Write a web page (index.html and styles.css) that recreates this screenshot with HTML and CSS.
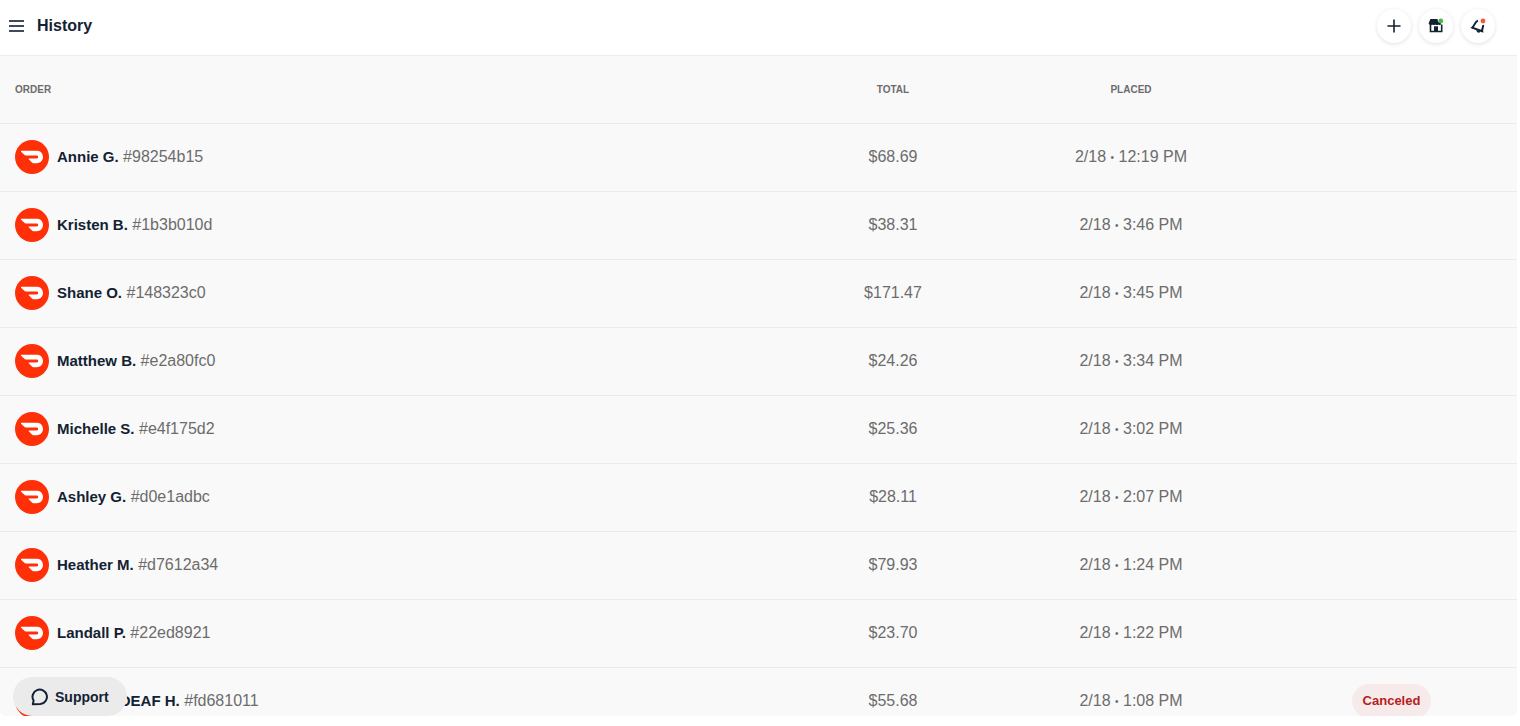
FILE: index.html
```html
<!DOCTYPE html>
<html lang="en">

<head>
  <meta charset="UTF-8" />
  <meta name="viewport" content="width=device-width, initial-scale=1.0" />
  <title>History</title>
  <link rel="stylesheet" href="styles.css">
</head>

<body>
  <!-- shared logo -->
  <svg hidden>
    <symbol id="dash" viewBox="0 0 24 24">
      <path d="M23.071 8.409a6.09 6.09 0 0 0-5.396-3.228H.584A.589.589 0 0 0 .17 6.184L3.894 9.93a1.752 1.752 0 0 0 1.242.516h12.049a1.554 1.554 0 1 1 .031 3.108H8.91a.589.589 0 0 0-.415 1.003l3.725 3.747a1.75 1.75 0 0 0 1.242.516h3.757c4.887 0 8.584-5.225 5.852-10.413" />
    </symbol>
  </svg>

  <div class="app">
    <header class="topbar">
      <button class="menu" aria-label="Menu">
        <svg width="16" height="14" viewBox="0 0 16 14">
          <path d="M1 2h15M1 7h15M1 12h15" />
        </svg>
      </button>
      <h1>History</h1>
      <div class="actions">
        <button class="round" aria-label="Add">
          <svg width="18" height="18" viewBox="0 0 18 18">
            <path class="line" d="M9 2.500v13M2.500 9h13" />
          </svg>
        </button>
        <button class="round" aria-label="Store status">
          <svg width="18" height="18" viewBox="0 0 18 18">
            <path class="fill" d="M3.400 2h7.200c0 2.500 1.300 4 3.400 4.300v1.200c-.9.700-1.900.6-2.600-.1-.9.900-2.300.9-3.100 0-.9.900-2.300.9-3.100 0C3.500 8.600 1.300 7.500 1.700 6z" />
            <path class="line" d="M3.500 7v7.500h11.200V7.500" />
            <path class="fill" d="M7 9.300h4v5.200H7z" />
            <circle class="green" cx="13.800" cy="4" r="2.400" />
          </svg>
        </button>
        <button class="round" aria-label="Notifications">
          <svg width="18" height="18" viewBox="0 0 18 18">
            <path class="bell" d="M9 3.600C5.900 4.600 6 8 3.200 10.700l10 3.500c-.3-2.500 1.200-4 .9-6.200" />
            <path class="fill" d="M7.300 13l4.400 1.600c-.9 2-4.400 1-4.400-1.600z" />
            <circle class="orange" cx="14" cy="4" r="2.400" />
          </svg>
        </button>
      </div>
    </header>

    <table class="orders">
      <colgroup>
        <col />
        <col class="col-total" />
        <col class="col-placed" />
        <col class="col-status" />
      </colgroup>
      <thead>
        <tr>
          <th class="first">ORDER</th>
          <th>TOTAL</th>
          <th>PLACED</th>
          <td></td>
        </tr>
      </thead>
      <tbody id="list"></tbody>
    </table>

    <button class="support">
      <svg width="18" height="18" viewBox="0 0 18 18">
        <path d="M1.800 16.300l.8-3.700A7.200 7.200 0 1 1 9.300 16z" />
      </svg>
      Support
    </button>
  </div>

  <script>
    let orders = [
      { name: 'Annie G.', id: '98254b15', total: '$68.69', time: '12:19 PM' },
      { name: 'Kristen B.', id: '1b3b010d', total: '$38.31', time: '3:46 PM' },
      { name: 'Shane O.', id: '148323c0', total: '$171.47', time: '3:45 PM' },
      { name: 'Matthew B.', id: 'e2a80fc0', total: '$24.26', time: '3:34 PM' },
      { name: 'Michelle S.', id: 'e4f175d2', total: '$25.36', time: '3:02 PM' },
      { name: 'Ashley G.', id: 'd0e1adbc', total: '$28.11', time: '2:07 PM' },
      { name: 'Heather M.', id: 'd7612a34', total: '$79.93', time: '1:24 PM' },
      { name: 'Landall P.', id: '22ed8921', total: '$23.70', time: '1:22 PM' },
      { name: 'MARISA DEAF H.', id: 'fd681011', total: '$55.68', time: '1:08 PM', status: 'Canceled' },
    ]
    let list = document.querySelector('#list')
    orders.forEach(function (item) {
      let tr = document.createElement('tr')
      tr.innerHTML = `
        <td class="first">
          <div class="order">
            <span class="logo"><svg width="22" height="22"><use href="#dash" /></svg></span>
            <span><b>${item.name}</b> #${item.id}</span>
          </div>
        </td>
        <td>${item.total}</td>
        <td>2/18 <span class="dot">•</span> ${item.time}</td>
        <td class="status">${item.status ? `<span class="badge">${item.status}</span>` : ''}</td>`
      list.appendChild(tr)
    })
  </script>
</body>

</html>
```

FILE: styles.css
```css
* {
  box-sizing: border-box;
  margin: 0;
  padding: 0;
}

body {
  background: #fff;
  color: #132233;
  font-family: "Liberation Sans", Arial, sans-serif;
  font-size: 16px;
}

button {
  border: none;
  background: none;
  color: inherit;
  font-family: inherit;
  cursor: pointer;
}

svg {
  display: block;
}

svg[hidden] {
  display: none;
}

.app {
  position: relative;
  height: calc(100vh - 10px);
  margin-right: 3px;
  border-radius: 0 0 5px 5px;
  background: #f9f9f9;
  overflow: hidden;
}

.topbar {
  display: flex;
  align-items: center;
  height: 56px;
  padding: 0 22px 3px 8px;
  border-bottom: 1px solid #ededed;
  background: #fff;
}

.topbar h1 {
  margin-left: 13px;
  font-size: 16px;
}

.menu path {
  stroke: #3c4a5c;
  stroke-width: 2;
}

.actions {
  display: flex;
  gap: 8px;
  margin-left: auto;
}

.round {
  display: flex;
  align-items: center;
  justify-content: center;
  width: 34px;
  height: 34px;
  border-radius: 50%;
  background: #fff;
  box-shadow: 0 1px 4px rgba(0, 0, 0, 0.12);
}

.line {
  fill: none;
  stroke: #132233;
  stroke-width: 1.6;
}

.bell {
  fill: none;
  stroke: #132233;
  stroke-width: 2;
}

.fill {
  fill: #132233;
}

.green {
  fill: #4cb84c;
}

.orange {
  fill: #ff5533;
}

.orders {
  width: 100%;
  border-collapse: collapse;
  table-layout: fixed;
  color: #6c6c6c;
  text-align: center;
}

.col-total,
.col-placed {
  width: 238px;
}

.col-status {
  width: 267px;
}

.orders tr {
  height: 68px;
  border-bottom: 1px solid #ebebeb;
}

.orders thead tr {
  height: 67px;
}

.orders th {
  font-size: 10px;
}

.orders .first {
  padding-left: 15px;
  text-align: left;
}

.order {
  display: flex;
  align-items: center;
  gap: 8px;
}

.order b {
  color: #132233;
  font-size: 15px;
}

.dot {
  font-size: 10px;
  vertical-align: 1px;
}

.logo {
  display: flex;
  align-items: center;
  justify-content: center;
  width: 34px;
  height: 34px;
  border-radius: 50%;
  background: #ff3008;
  fill: #fff;
}

.status {
  padding-left: 16px;
}

.badge {
  display: inline-block;
  padding: 0 11px;
  border-radius: 17px;
  background: #f7eaea;
  color: #b71c1c;
  font-size: 13px;
  font-weight: bold;
  line-height: 34px;
}

/* floats over the list */
.support {
  position: absolute;
  bottom: 0;
  left: 13px;
  display: flex;
  align-items: center;
  gap: 6px;
  height: 39px;
  padding: 0 18px;
  border-radius: 20px;
  background: #ebebeb;
  font-size: 14px;
  font-weight: bold;
}

.support path {
  fill: none;
  stroke: #132233;
  stroke-width: 2;
  stroke-linejoin: round;
}
```
